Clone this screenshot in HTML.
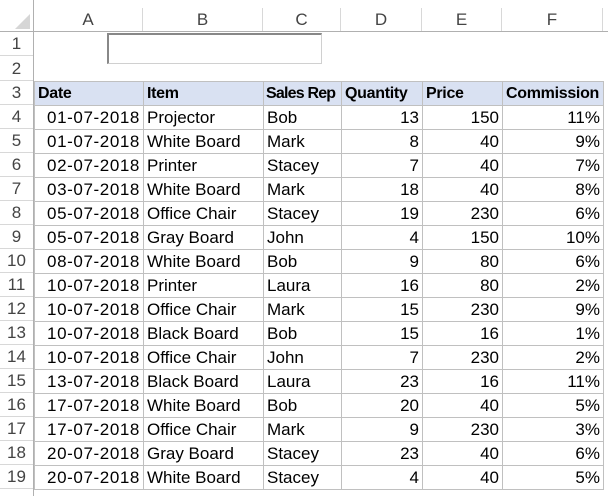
<!DOCTYPE html>
<html><head><meta charset="utf-8"><style>
html,body{margin:0;width:608px;height:496px;overflow:hidden}
body{background:#fff;font-family:"Liberation Sans",sans-serif;position:relative}
.ch{position:absolute;top:8px;height:23px;border-right:1px solid #d8d8d8;box-sizing:border-box;text-align:center;font-size:17px;color:#444;line-height:23px}
.chline{position:absolute;left:0;top:31px;width:608px;height:1px;background:#b0b0b0}
.rh{position:absolute;left:0;width:33px;height:24px;border-bottom:1px solid #d8d8d8;box-sizing:border-box;text-align:center;font-size:17px;color:#444;line-height:24px}
.rvline{position:absolute;left:33px;top:0;width:1px;height:496px;background:#b0b0b0}
table{position:absolute;left:34px;top:81px;width:569px;border-collapse:collapse;table-layout:fixed;font-size:17px;color:#000}
td{height:23px;padding:0 3px;border:1px solid #c0c0c0;white-space:nowrap;line-height:22px;overflow:hidden}
td.r{text-align:right}
td.d{letter-spacing:.6px}
tr.h td{background:#d9e1f2;font-weight:bold;font-size:16px;letter-spacing:-0.3px;vertical-align:bottom}
tr.h td.s{letter-spacing:-0.8px;padding:0 2px}
.box{position:absolute;left:107px;top:33px;width:215px;height:31px;border:1px solid #d0d0d0;border-left:2px solid #888;border-top:2px solid #888;box-sizing:border-box}
</style></head><body>
<svg style="position:absolute;left:15px;top:14px" width="16" height="16"><polygon points="15,0 15,15 0,15" fill="#d6d6d6"/></svg>
<div class="ch" style="left:34px;width:109px">A</div>
<div class="ch" style="left:143px;width:120px">B</div>
<div class="ch" style="left:263px;width:78px">C</div>
<div class="ch" style="left:341px;width:81px">D</div>
<div class="ch" style="left:422px;width:80px">E</div>
<div class="ch" style="left:502px;width:101px">F</div>
<div class="chline"></div>
<div class="rvline"></div>
<div class="rh" style="top:32px">1</div>
<div class="rh" style="top:57px">2</div>
<div class="rh" style="top:81px">3</div>
<div class="rh" style="top:105px">4</div>
<div class="rh" style="top:129px">5</div>
<div class="rh" style="top:153px">6</div>
<div class="rh" style="top:177px">7</div>
<div class="rh" style="top:201px">8</div>
<div class="rh" style="top:225px">9</div>
<div class="rh" style="top:249px">10</div>
<div class="rh" style="top:273px">11</div>
<div class="rh" style="top:297px">12</div>
<div class="rh" style="top:321px">13</div>
<div class="rh" style="top:345px">14</div>
<div class="rh" style="top:369px">15</div>
<div class="rh" style="top:393px">16</div>
<div class="rh" style="top:417px">17</div>
<div class="rh" style="top:441px">18</div>
<div class="rh" style="top:465px">19</div>
<div class="box"></div>
<table>
<colgroup><col style="width:109px"><col style="width:120px"><col style="width:78px"><col style="width:81px"><col style="width:80px"><col style="width:101px"></colgroup>
<tr class="h"><td>Date</td><td>Item</td><td class="s">Sales Rep</td><td>Quantity</td><td>Price</td><td>Commission</td></tr>
<tr><td class="r d">01-07-2018</td><td>Projector</td><td>Bob</td><td class="r">13</td><td class="r">150</td><td class="r">11%</td></tr>
<tr><td class="r d">01-07-2018</td><td>White Board</td><td>Mark</td><td class="r">8</td><td class="r">40</td><td class="r">9%</td></tr>
<tr><td class="r d">02-07-2018</td><td>Printer</td><td>Stacey</td><td class="r">7</td><td class="r">40</td><td class="r">7%</td></tr>
<tr><td class="r d">03-07-2018</td><td>White Board</td><td>Mark</td><td class="r">18</td><td class="r">40</td><td class="r">8%</td></tr>
<tr><td class="r d">05-07-2018</td><td>Office Chair</td><td>Stacey</td><td class="r">19</td><td class="r">230</td><td class="r">6%</td></tr>
<tr><td class="r d">05-07-2018</td><td>Gray Board</td><td>John</td><td class="r">4</td><td class="r">150</td><td class="r">10%</td></tr>
<tr><td class="r d">08-07-2018</td><td>White Board</td><td>Bob</td><td class="r">9</td><td class="r">80</td><td class="r">6%</td></tr>
<tr><td class="r d">10-07-2018</td><td>Printer</td><td>Laura</td><td class="r">16</td><td class="r">80</td><td class="r">2%</td></tr>
<tr><td class="r d">10-07-2018</td><td>Office Chair</td><td>Mark</td><td class="r">15</td><td class="r">230</td><td class="r">9%</td></tr>
<tr><td class="r d">10-07-2018</td><td>Black Board</td><td>Bob</td><td class="r">15</td><td class="r">16</td><td class="r">1%</td></tr>
<tr><td class="r d">10-07-2018</td><td>Office Chair</td><td>John</td><td class="r">7</td><td class="r">230</td><td class="r">2%</td></tr>
<tr><td class="r d">13-07-2018</td><td>Black Board</td><td>Laura</td><td class="r">23</td><td class="r">16</td><td class="r">11%</td></tr>
<tr><td class="r d">17-07-2018</td><td>White Board</td><td>Bob</td><td class="r">20</td><td class="r">40</td><td class="r">5%</td></tr>
<tr><td class="r d">17-07-2018</td><td>Office Chair</td><td>Mark</td><td class="r">9</td><td class="r">230</td><td class="r">3%</td></tr>
<tr><td class="r d">20-07-2018</td><td>Gray Board</td><td>Stacey</td><td class="r">23</td><td class="r">40</td><td class="r">6%</td></tr>
<tr><td class="r d">20-07-2018</td><td>White Board</td><td>Stacey</td><td class="r">4</td><td class="r">40</td><td class="r">5%</td></tr>
</table>
</body></html>
